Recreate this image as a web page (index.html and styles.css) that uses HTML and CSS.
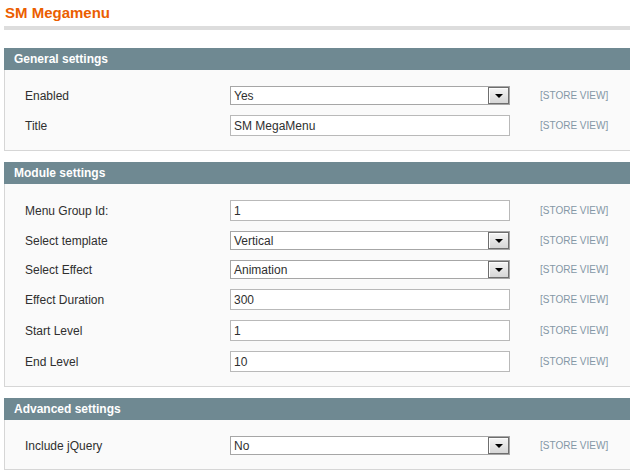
FILE: index.html
```html
<!DOCTYPE html>
<html>
<head>
<meta charset="utf-8">
<link rel="stylesheet" href="styles.css">
</head>
<body>
<div class="page">
  <div class="content-header">
    <h3 class="page-title">SM Megamenu</h3>
  </div>

  <div class="section">
    <div class="section-head"><h4>General settings</h4></div>
    <div class="section-body">
      <div class="row">
        <div class="label">Enabled</div>
        <div class="select"><span class="val">Yes</span><span class="btn"><span class="tri"></span></span></div>
        <div class="scope">[STORE VIEW]</div>
      </div>
      <div class="row">
        <div class="label">Title</div>
        <div class="input">SM MegaMenu</div>
        <div class="scope">[STORE VIEW]</div>
      </div>
    </div>
  </div>

  <div class="section">
    <div class="section-head"><h4>Module settings</h4></div>
    <div class="section-body">
      <div class="row">
        <div class="label">Menu Group Id:</div>
        <div class="input">1</div>
        <div class="scope">[STORE VIEW]</div>
      </div>
      <div class="row">
        <div class="label">Select template</div>
        <div class="select"><span class="val">Vertical</span><span class="btn"><span class="tri"></span></span></div>
        <div class="scope">[STORE VIEW]</div>
      </div>
      <div class="row">
        <div class="label">Select Effect</div>
        <div class="select"><span class="val">Animation</span><span class="btn"><span class="tri"></span></span></div>
        <div class="scope">[STORE VIEW]</div>
      </div>
      <div class="row">
        <div class="label">Effect Duration</div>
        <div class="input">300</div>
        <div class="scope">[STORE VIEW]</div>
      </div>
      <div class="row">
        <div class="label">Start Level</div>
        <div class="input">1</div>
        <div class="scope">[STORE VIEW]</div>
      </div>
      <div class="row">
        <div class="label">End Level</div>
        <div class="input">10</div>
        <div class="scope">[STORE VIEW]</div>
      </div>
    </div>
  </div>

  <div class="section">
    <div class="section-head"><h4>Advanced settings</h4></div>
    <div class="section-body">
      <div class="row">
        <div class="label">Include jQuery</div>
        <div class="select"><span class="val">No</span><span class="btn"><span class="tri"></span></span></div>
        <div class="scope">[STORE VIEW]</div>
      </div>
    </div>
  </div>
</div>
</body>
</html>
```
FILE: styles.css
```css
html, body {
  margin: 0;
  padding: 0;
  background: #fff;
  overflow: hidden;
}
body {
  font-family: "Liberation Sans", Arial, sans-serif;
  font-size: 12px;
  color: #2f2f2f;
}
.page {
  margin-left: 4px;
}
.content-header {
  padding-top: 4px;
  border-bottom: 4px solid #dddddd;
  margin-bottom: 18px;
}
.page-title {
  margin: 0 0 5px 1px;
  font-size: 15px;
  line-height: 17px;
  font-weight: bold;
  color: #eb5e00;
}
.section {
  margin-bottom: 11px;
}
.section-head {
  background: #6f8992;
  height: 22px;
  padding: 0 10px;
}
.section-head h4 {
  margin: 0;
  color: #fff;
  font-size: 12px;
  font-weight: bold;
  line-height: 22px;
}
.section-body {
  background: #fafafa;
  border: 1px solid #d6d6d6;
  border-top: 0;
  border-right: 0;
  padding: 16px 20px 14px 20px;
  display: flex;
  flex-direction: column;
  gap: 10px;
}
.row {
  display: flex;
  align-items: center;
}
.label {
  width: 205px;
  flex: none;
}
.input, .select {
  width: 280px;
  box-sizing: border-box;
  background: #fff;
  flex: none;
  display: flex;
  align-items: center;
}
.input {
  height: 21px;
  border: 1px solid #b9b9b9;
  padding-left: 3px;
}
.select {
  height: 19px;
  border: 1px solid #a6a6a6;
  padding-left: 3px;
}
.select .val {
  flex: 1;
}
.select .btn {
  width: 21px;
  height: 17px;
  box-sizing: border-box;
  border: 1px solid #6e6e6e;
  box-shadow: inset 1px 1px 0 #fdfdfd;
  background: linear-gradient(#f4f4f4, #d6d6d6);
  display: flex;
  align-items: center;
  justify-content: center;
}
.select .tri {
  width: 0;
  height: 0;
  border-left: 4px solid transparent;
  border-right: 4px solid transparent;
  border-top: 4px solid #000;
  margin-top: 1px;
}
.scope {
  margin-left: 30px;
  font-size: 10px;
  color: #8497a6;
  white-space: nowrap;
}
```
